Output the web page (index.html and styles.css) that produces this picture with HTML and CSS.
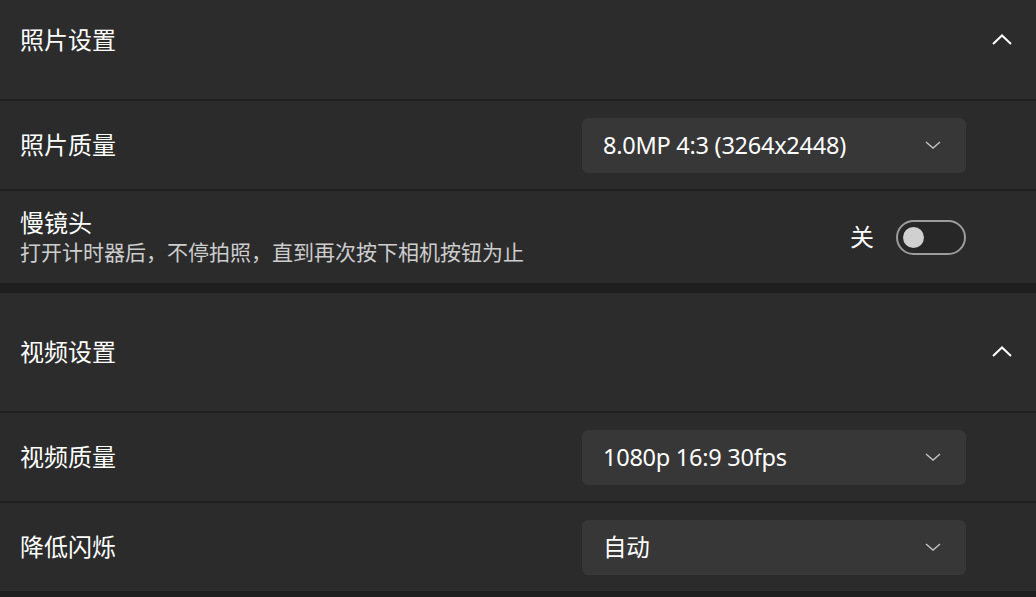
FILE: index.html
```html
<!DOCTYPE html>
<html lang="zh-CN">
<head>
<meta charset="utf-8">
<link rel="stylesheet" href="styles.css">
</head>
<body>
<div class="page">
  <section class="expander">
    <div class="exp-header">
      <span class="title">照片设置</span>
      <svg class="up" width="20" height="11" viewBox="0 0 20 11"><path d="M1 10 L10 1.5 L19 10" fill="none" stroke="#ffffff" stroke-width="2"/></svg>
    </div>
    <div class="row">
      <span class="label">照片质量</span>
      <div class="select">
        <span class="select-text">8.0MP 4:3 (3264x2448)</span>
        <svg class="down" width="16" height="8" viewBox="0 0 16 8"><path d="M1 1 L8 7 L15 1" fill="none" stroke="#c4c4c4" stroke-width="1.4"/></svg>
      </div>
    </div>
    <div class="row row-tall">
      <div class="text-stack">
        <span class="label">慢镜头</span>
        <span class="desc">打开计时器后，不停拍照，直到再次按下相机按钮为止</span>
      </div>
      <div class="toggle-wrap">
        <span class="toggle-label">关</span>
        <span class="toggle"><span class="knob"></span></span>
      </div>
    </div>
  </section>
  <section class="expander">
    <div class="exp-header">
      <span class="title">视频设置</span>
      <svg class="up" width="20" height="11" viewBox="0 0 20 11"><path d="M1 10 L10 1.5 L19 10" fill="none" stroke="#ffffff" stroke-width="2"/></svg>
    </div>
    <div class="row">
      <span class="label">视频质量</span>
      <div class="select">
        <span class="select-text">1080p 16:9 30fps</span>
        <svg class="down" width="16" height="8" viewBox="0 0 16 8"><path d="M1 1 L8 7 L15 1" fill="none" stroke="#c4c4c4" stroke-width="1.4"/></svg>
      </div>
    </div>
    <div class="row">
      <span class="label">降低闪烁</span>
      <div class="select">
        <span class="select-text">自动</span>
        <svg class="down" width="16" height="8" viewBox="0 0 16 8"><path d="M1 1 L8 7 L15 1" fill="none" stroke="#c4c4c4" stroke-width="1.4"/></svg>
      </div>
    </div>
  </section>
</div>
</body>
</html>
```

FILE: styles.css
```css
html, body {
  margin: 0;
  padding: 0;
  background: #1f1f1f;
  height: 100%;
  overflow: hidden;
}
body {
  font-family: "Noto Sans", "Noto Sans CJK SC", sans-serif;
  color: #ffffff;
}
.page {
  margin-top: -19px;
  display: flex;
  flex-direction: column;
  gap: 10px;
}
.expander {
  display: flex;
  flex-direction: column;
  gap: 2px;
}
.exp-header {
  height: 118px;
  background: #2c2c2c;
  display: flex;
  align-items: center;
  justify-content: space-between;
  padding: 0 24px 0 20px;
}
.title {
  font-size: 24px;
  line-height: 32px;
}
.up {
  display: block;
  margin-top: -2px;
}
.row {
  height: 88px;
  background: #2b2b2b;
  display: flex;
  align-items: center;
  justify-content: space-between;
  padding: 0 70px 0 20px;
}
.row-tall {
  height: 92px;
}
.label {
  font-size: 24px;
  line-height: 30px;
}
.text-stack {
  display: flex;
  flex-direction: column;
}
.desc {
  font-size: 21px;
  line-height: 28px;
  color: #cdcdcd;
}
.select {
  width: 384px;
  height: 55px;
  box-sizing: border-box;
  background: #373737;
  border-radius: 6px;
  display: flex;
  align-items: center;
  justify-content: space-between;
  padding: 0 25px 0 21px;
}
.select-text {
  font-size: 23.5px;
  letter-spacing: -0.25px;
  line-height: 30px;
  color: #ffffff;
}
.down {
  display: block;
}
.toggle-wrap {
  display: flex;
  align-items: center;
  gap: 22px;
}
.toggle-label {
  font-size: 24px;
  line-height: 30px;
}
.toggle {
  width: 70px;
  height: 35px;
  box-sizing: border-box;
  border: 2px solid #9c9c9c;
  border-radius: 18px;
  background: #272727;
  display: flex;
  align-items: center;
  padding-left: 5px;
}
.knob {
  width: 21px;
  height: 21px;
  border-radius: 50%;
  background: #d0d0d0;
}
```
